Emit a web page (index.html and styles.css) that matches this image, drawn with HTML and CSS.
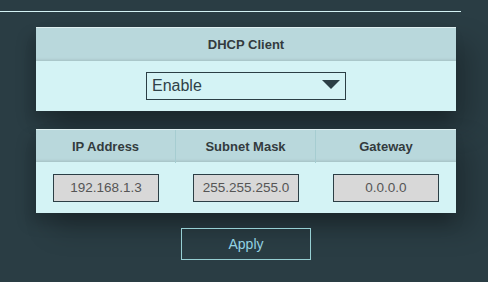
FILE: index.html
```html
<!DOCTYPE html>
<html lang="en">
<head>
    <title>WAN - DHCP</title>
    <meta name="viewport" content="width=device-width, initial-scale=1">
    <link rel="stylesheet" href="styles.css">
</head>
<body>
    <div class="tb"></div>

    <div class="pn">
        <div class="ph">DHCP Client</div>
        <div class="pb">
            <div class="sel">
                <span>Enable</span>
                <svg width="18" height="9" viewBox="0 0 18 9"><path d="M0 0H18L9 9Z" fill="#2b3e45"/></svg>
            </div>
        </div>
    </div>

    <div class="pn">
        <div class="ph cols">
            <div>IP Address</div>
            <div>Subnet Mask</div>
            <div>Gateway</div>
        </div>
        <div class="pb cols">
            <div><span class="ip">192.168.1.3</span></div>
            <div><span class="ip">255.255.255.0</span></div>
            <div><span class="ip">0.0.0.0</span></div>
        </div>
    </div>

    <div class="ac">
        <button class="ab">Apply</button>
    </div>
</body>
</html>
```

FILE: styles.css
```css
/* Colores */
:root {
    --bg: #2a3d44;
    --hd: #b9d8dc;
    --bd: #d4f3f5;
    --dk: #2b3e45;
}

html, body {
    margin: 0;
    padding: 0;
    height: 100%;
    background-color: var(--bg);
    font-family: 'Liberation Sans', Arial, sans-serif;
    overflow: hidden;
}

/* Linea superior */
.tb {
    width: 461px;
    height: 11px;
    border-bottom: 1px solid var(--bd);
    margin-bottom: 15px;
}

/* Paneles */
.pn {
    width: 420px;
    margin: 0 0 18px 36px;
    box-shadow: 16px 16px 26px rgba(0, 0, 0, 0.22), -6px 10px 14px rgba(0, 0, 0, 0.18);
}

.ph {
    background-color: var(--hd);
    height: 34px;
    line-height: 34px;
    text-align: center;
    font-size: 13px;
    font-weight: bold;
    color: #333b3e;
    border-top: 1px solid #dfeff0;
    box-sizing: border-box;
    box-shadow: inset 0 -3px 3px -2px rgba(0, 0, 0, 0.12);
}

.pb {
    background-color: var(--bd);
    height: 50px;
    display: flex;
    align-items: center;
    justify-content: center;
}

.cols {
    display: grid;
    grid-template-columns: repeat(3, 1fr);
}

.ph.cols {
    height: 33px;
    line-height: 33px;
}

.ph.cols div:not(:last-child) {
    border-right: 1px solid #a6cdd1;
}

.pb.cols {
    height: 51px;
    justify-items: center;
}

/* Selector */
.sel {
    width: 200px;
    height: 28px;
    box-sizing: border-box;
    border: 1px solid var(--dk);
    display: flex;
    align-items: center;
    justify-content: space-between;
    padding: 0 5px 0 5px;
    font-size: 16px;
    color: #2f4148;
}

.sel svg {
    display: block;
    margin-top: -3px;
}

/* Campos IP */
.ip {
    display: block;
    width: 106px;
    height: 28px;
    line-height: 26px;
    box-sizing: border-box;
    border: 1px solid var(--dk);
    background-color: #d8d8d8;
    text-align: center;
    font-size: 13.5px;
    color: #555;
}

/* Boton */
.ac {
    width: 420px;
    margin-left: 36px;
    display: flex;
    justify-content: center;
}

.ab {
    width: 130px;
    height: 32px;
    margin-top: -3px;
    background: none;
    border: 1px solid #96cfd3;
    color: #93d2e2;
    font-family: 'Liberation Sans', Arial, sans-serif;
    font-size: 14px;
}
```
